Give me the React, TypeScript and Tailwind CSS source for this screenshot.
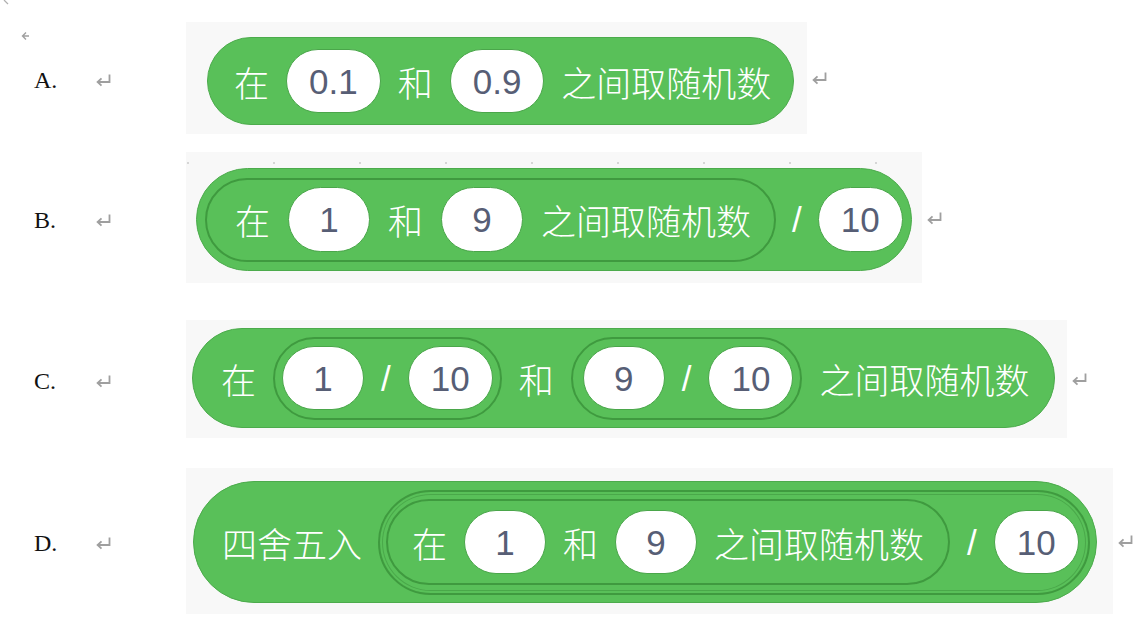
import type { ReactNode } from "react";

const CJK = "font-['Noto_Sans_CJK_SC','Noto_Sans',sans-serif]";
const NUM = "font-['Liberation_Sans',Arial,sans-serif]";

function RetMark({ className = "" }: { className?: string }) {
  return (
    <svg width="17" height="14" viewBox="0 0 17 14" className={className}>
      <path d="M14.5 1.5 V9 H3" fill="none" stroke="#9f9f9f" strokeWidth="1.8" />
      <path d="M6.5 5.4 L2.6 9 L6.5 12.6" fill="none" stroke="#9f9f9f" strokeWidth="1.8" />
    </svg>
  );
}

function Word({ children }: { children: ReactNode }) {
  return (
    <span className={`${CJK} font-light text-[35px] leading-none text-white whitespace-nowrap`}>
      {children}
    </span>
  );
}

function Slash() {
  return <span className={`${NUM} text-[35px] leading-none text-white`}>/</span>;
}

function Pill({ children, h = "h-[64px]" }: { children: ReactNode; h?: string }) {
  return (
    <div
      className={`${h} min-w-[82px] px-[22px] rounded-full bg-white border border-[#4aa64a] flex items-center justify-center ${NUM} text-[35px] leading-none text-[#575e75]`}
    >
      {children}
    </div>
  );
}

function Block({
  children,
  className,
}: {
  children: ReactNode;
  className: string;
}) {
  return (
    <div className={`flex items-center rounded-full bg-[#59c059] ${className}`}>
      {children}
    </div>
  );
}

function Row({
  label,
  panel,
  children,
  className,
}: {
  label: string;
  panel: string;
  children: ReactNode;
  className: string;
}) {
  return (
    <div className={`flex items-center pl-[34px] ${className}`}>
      <div className="w-[61px] pt-1 font-['Liberation_Serif',serif] text-[24px] text-[#111]">
        {label}
      </div>
      <RetMark className="mt-1" />
      <div className={`ml-[74px] flex items-start bg-[#f8f8f8] relative ${panel}`}>
        {children}
      </div>
      <RetMark className="ml-[4px]" />
    </div>
  );
}

export default function App() {
  return (
    <div className="w-[1139px] h-[630px] bg-white relative overflow-hidden flex flex-col">
      <svg width="10" height="10" viewBox="0 0 10 10" className="absolute left-[2px] top-0">
        <path d="M2 0 L6 4" stroke="#b0b0b0" strokeWidth="1.2" />
      </svg>
      <svg width="10" height="10" viewBox="0 0 10 10" className="absolute left-[20px] top-[31px]">
        <path d="M6 1.5 L2.5 5 L6 8.5 M2.5 5 H9" fill="none" stroke="#a0a0a0" strokeWidth="1.4" />
      </svg>

      {/* A */}
      <Row label="A." className="mt-[22px]" panel="w-[621px] h-[112px] pl-[21px] pt-[15px]">
        <Block className="h-[88px] pl-[26px] pr-[22px] gap-[17px] border border-[#4cab4c]">
          <Word>在</Word>
          <Pill>0.1</Pill>
          <Word>和</Word>
          <Pill>0.9</Pill>
          <Word>之间取随机数</Word>
        </Block>
      </Row>

      {/* B */}
      <Row label="B." className="mt-[18px]" panel="w-[736px] h-[131px] pl-[10px] pt-[16px]">
        <div className="absolute left-0 top-[10px] flex gap-[84px] pl-[1px]">
          {[0, 1, 2, 3, 4, 5, 6, 7, 8].map((i) => (
            <span key={i} className="w-[2px] h-[2px] bg-[#d6d6d6]" />
          ))}
        </div>
        <Block className="h-[103px] pl-[8px] pr-[8px] gap-[16px] border border-[#4cab4c]">
          <Block className="h-[84px] pl-[28px] pr-[23px] gap-[18px] border-2 border-[#3f9a3f]">
            <Word>在</Word>
            <Pill h="h-[65px]">1</Pill>
            <Word>和</Word>
            <Pill h="h-[65px]">9</Pill>
            <Word>之间取随机数</Word>
          </Block>
          <Slash />
          <Pill h="h-[65px]">10</Pill>
        </Block>
      </Row>

      {/* C */}
      <Row label="C." className="mt-[37px]" panel="w-[881px] h-[118px] pl-[6px] pt-[8px]">
        <Block className="h-[100px] pl-[28px] pr-[25px] gap-[17px] border border-[#4cab4c]">
          <Word>在</Word>
          <Block className="h-[83px] pl-[7px] pr-[7px] gap-[17px] border-2 border-[#3f9a3f]">
            <Pill>1</Pill>
            <Slash />
            <Pill>10</Pill>
          </Block>
          <Word>和</Word>
          <Block className="h-[83px] pl-[10px] pr-[7px] gap-[17px] border-2 border-[#3f9a3f]">
            <Pill>9</Pill>
            <Slash />
            <Pill>10</Pill>
          </Block>
          <Word>之间取随机数</Word>
        </Block>
      </Row>

      {/* D */}
      <Row label="D." className="mt-[30px]" panel="w-[927px] h-[146px] pl-[7px] pt-[13px]">
        <Block className="h-[122px] pl-[28px] pr-[6px] gap-[16px] border border-[#4cab4c]">
          <Word>四舍五入</Word>
          <Block className="h-[105px] pl-[6px] pr-[9px] gap-[17px] border-2 border-[#3f9a3f] shadow-[inset_0_0_0_2px_#59c059,inset_0_0_0_3px_#4aa84a]">
            <Block className="h-[86px] pl-[24px] pr-[24px] gap-[17px] border-2 border-[#3f9a3f]">
              <Word>在</Word>
              <Pill>1</Pill>
              <Word>和</Word>
              <Pill>9</Pill>
              <Word>之间取随机数</Word>
            </Block>
            <Slash />
            <Pill>10</Pill>
          </Block>
        </Block>
      </Row>
    </div>
  );
}
